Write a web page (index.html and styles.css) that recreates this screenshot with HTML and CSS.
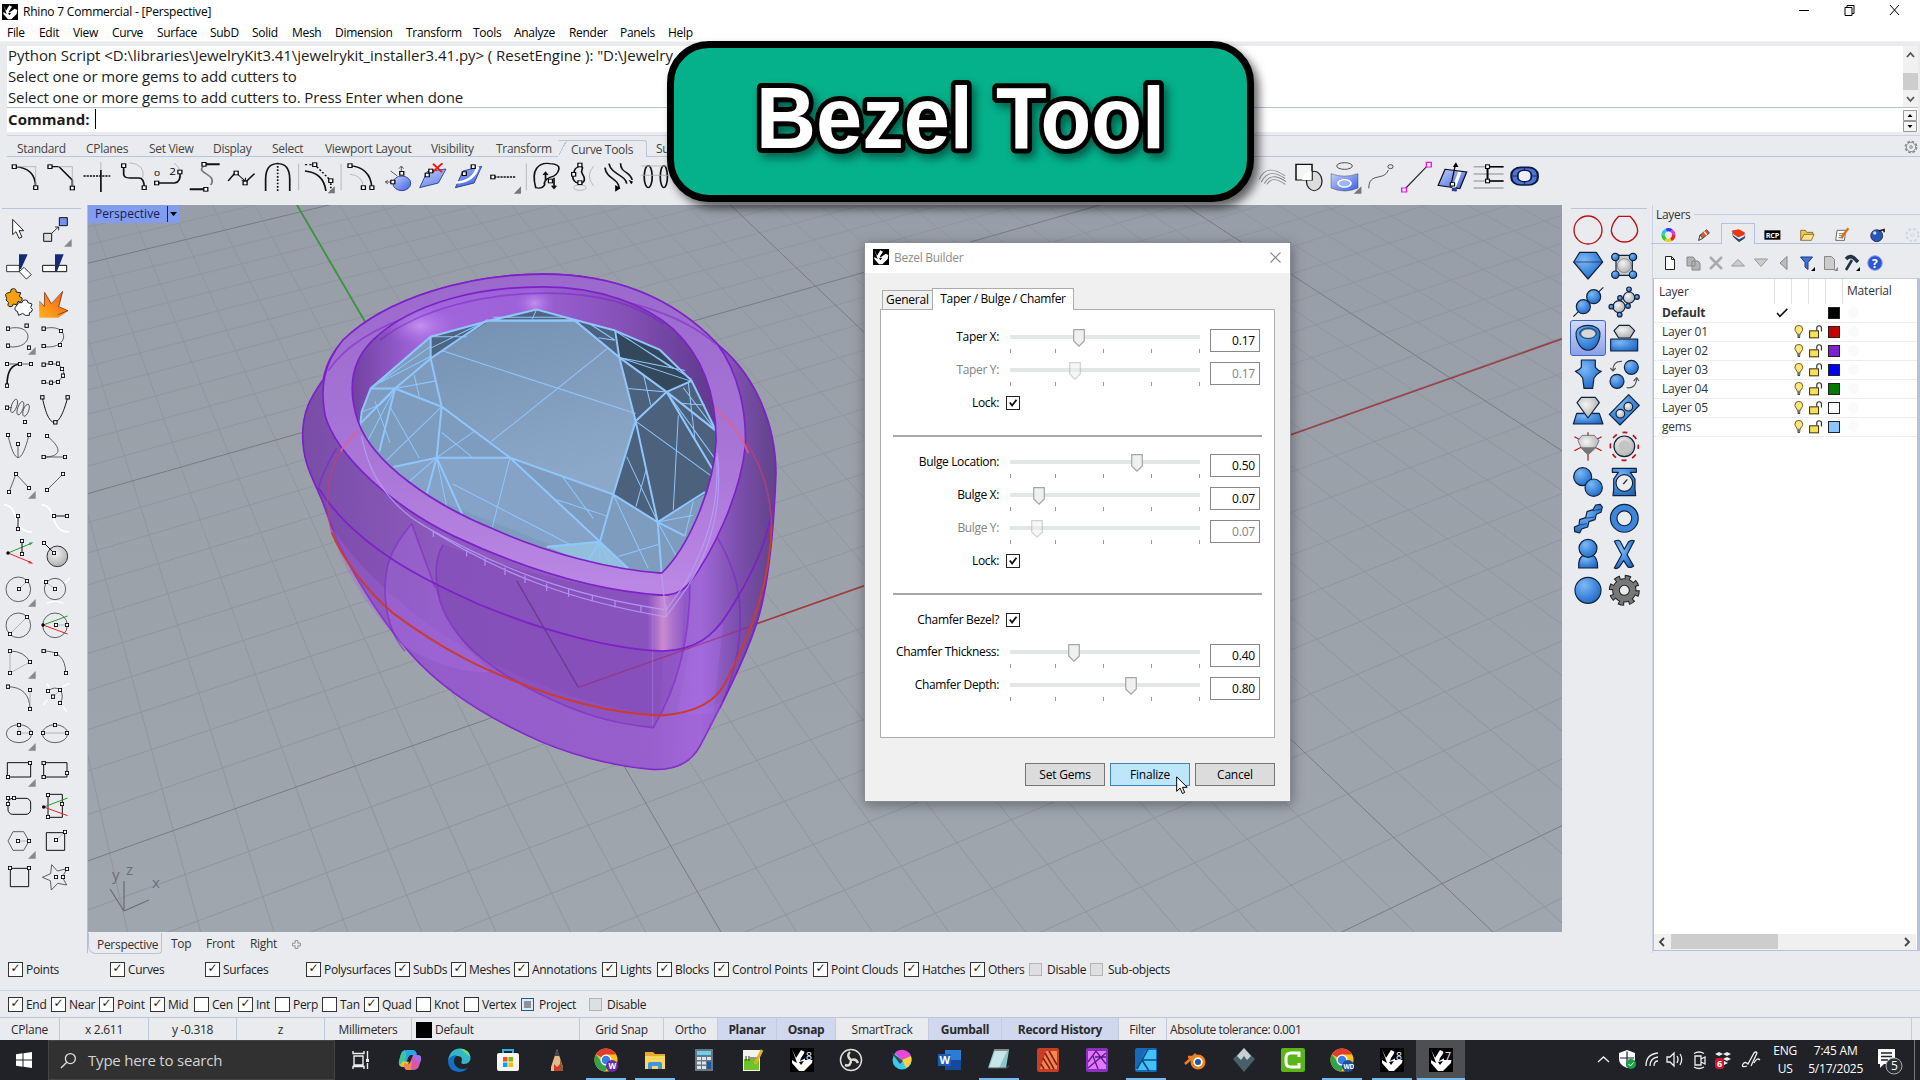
FILE: index.html
```
<!DOCTYPE html>
<html lang="en">
<head>
	<meta charset="utf-8">
	<title>Rhino 7 Commercial - [Perspective]</title>
	<link rel="stylesheet" href="styles.css">
</head>
<body>

<!-- shared symbols -->
<svg class="defs" width="0" height="0">
	<defs>
		<marker id="sq" markerUnits="userSpaceOnUse" markerWidth="14" markerHeight="14" refX="7" refY="7"><rect x="2" y="2" width="10" height="10" fill="#fff" stroke="#000" stroke-width="3"/></marker>
		<marker id="sqw" markerUnits="userSpaceOnUse" markerWidth="14" markerHeight="16" refX="7" refY="8"><rect x="2.500" y="2.500" width="9" height="11" fill="#fff" stroke="#000" stroke-width="2.800"/></marker>
		<radialGradient id="ball" cx=".35" cy=".3" r=".8"><stop offset="0" stop-color="#7fb9f4"/><stop offset=".6" stop-color="#3d86dc"/><stop offset="1" stop-color="#2463b4"/></radialGradient>
		<radialGradient id="silver" cx=".4" cy=".35" r=".8"><stop offset="0" stop-color="#f4f4f4"/><stop offset="1" stop-color="#a2a2a2"/></radialGradient>
		<radialGradient id="shine"><stop offset="0" stop-color="#d8a8fa" stop-opacity=".65"/><stop offset="1" stop-color="#b070ee" stop-opacity="0"/></radialGradient>
		<linearGradient id="steel" x1="0" y1="0" x2="1" y2="1"><stop offset="0" stop-color="#c3d0ff"/><stop offset="1" stop-color="#3d5fe0"/></linearGradient>
		<linearGradient id="fire" x1="0" y1="1" x2="1" y2="0"><stop offset="0" stop-color="#ffb020"/><stop offset="1" stop-color="#ee5a10"/></linearGradient>
		<linearGradient id="rim" x1="0" y1="0" x2="0" y2="1"><stop offset="0" stop-color="#9b68cc"/><stop offset=".5" stop-color="#a673d6"/><stop offset="1" stop-color="#bb88e4"/></linearGradient>
		<linearGradient id="wall" x1="0" y1="0" x2="1" y2="0"><stop offset="0" stop-color="#774aa6"/><stop offset=".3" stop-color="#8d57c0"/><stop offset=".72" stop-color="#9159c4"/><stop offset=".84" stop-color="#a166da"/><stop offset=".92" stop-color="#7a4bac"/><stop offset="1" stop-color="#5f3f88"/></linearGradient>
		<linearGradient id="hole" x1="0" y1="0" x2="1" y2="0"><stop offset="0" stop-color="#6d3f9c"/><stop offset=".2" stop-color="#a166dc"/><stop offset=".5" stop-color="#9c61d6"/><stop offset=".75" stop-color="#8450b6"/><stop offset="1" stop-color="#5c3888"/></linearGradient>
		<linearGradient id="table" x1="0" y1="0" x2=".3" y2="1"><stop offset="0" stop-color="#7591b1"/><stop offset="1" stop-color="#8ca8c8"/></linearGradient>
		<linearGradient id="glint" x1="0" y1="0" x2="1" y2="0"><stop offset="0" stop-color="#c88cdc" stop-opacity=".1"/><stop offset=".4" stop-color="#e4a4d4" stop-opacity=".7"/><stop offset="1" stop-color="#c88cdc" stop-opacity=".05"/></linearGradient>
		<symbol id="more" viewBox="0 0 108 108"><path d="M107 81v23h-23z" fill="#888"/></symbol>
		<symbol id="rhino" viewBox="0 0 24 24"><rect width="24" height="24" fill="#000"/><path d="M2 1l4 9 5-8 4 2-4 6-1 3 4-2 5-4 4 2-1 6-8 8-5 0-7-8 0-3 5 3z" fill="#fff"/><path d="M9 14l5-1-3 4z" fill="#000"/></symbol>
		<symbol id="tickbold" viewBox="0 0 13 13"><path d="M3 6l2.5 3.2L10.3 3" fill="none" stroke="#111" stroke-width="2"/></symbol>
		<symbol id="thumb" viewBox="0 0 12 18"><path d="M.7.7h10.6v11.3l-5.3 5.2-5.3-5.2z" fill="#f0f0f0" stroke="#a5a5a5" stroke-width="1.2"/></symbol>
		<symbol id="bulb" viewBox="0 0 27 36"><path d="M9 24c0-5-6-7-6-13a10 10 0 0120 0c0 6-6 8-6 13z" fill="#ffe57a" stroke="#55440a" stroke-width="2.2"/><path d="M9 28h8M10 32h6" stroke="#444" stroke-width="3"/></symbol>
		<symbol id="unlock" viewBox="0 0 36 36"><rect x="1.500" y="15" width="23" height="18" fill="#f8e05c" stroke="#3a3208" stroke-width="2.6"/><path d="M20 14V8a6 6 0 0112 0v9" fill="none" stroke="#333" stroke-width="3"/></symbol>
		<symbol id="chrome" viewBox="0 0 24 24"><circle cx="12" cy="12" r="11.500" fill="#fbc116"/><path d="M12 12L2 6.300A11.500 11.500 0 0122 6.500H12z" fill="#e33b2e"/><path d="M2 6.300A11.500 11.500 0 0011 23.500L16 14.500 8 14.500z" fill="#31a350"/><circle cx="12" cy="12" r="5.500" fill="#fff"/><circle cx="12" cy="12" r="4.300" fill="#3b7de8"/></symbol>
	</defs>
</svg>

<header class="titlebar">
	<svg class="app-icon"><use href="#rhino"/></svg>
	<span>Rhino 7 Commercial - [Perspective]</span>
	<svg class="window-buttons" viewBox="0 0 120 20"><path d="M5 10.500h10M51 7.500h7v8h-7zM53 7.500v-2h7v8h-2M96 5l9 10M105 5l-9 10" fill="none" stroke="#000"/></svg>
</header>

<nav class="menubar">
	<span>File</span><span>Edit</span><span>View</span><span>Curve</span><span>Surface</span><span>SubD</span><span>Solid</span><span>Mesh</span><span>Dimension</span><span>Transform</span><span>Tools</span><span>Analyze</span><span>Render</span><span>Panels</span><span>Help</span>
</nav>

<section class="command">
	<div class="history">
		<div>
			<p class="wide">Python Script &lt;D:\libraries\JewelryKit3.41\jewelrykit_installer3.41.py&gt; ( ResetEngine ): "D:\Jewelry</p>
			<p>Select one or more gems to add cutters to</p>
			<p>Select one or more gems to add cutters to. Press Enter when done</p>
		</div>
		<svg class="vscroll" viewBox="0 0 15 61"><rect width="15" height="61" fill="#f1f1f1"/><rect y="27" width="15" height="17" fill="#cdcdcd"/><path d="M4 11l3.500-4 3.500 4M4 51l3.500 4 3.500-4" fill="none" stroke="#555" stroke-width="1.800"/></svg>
	</div>
	<div class="prompt">
		<b>Command:</b><i></i>
		<svg viewBox="0 0 15 23"><path d="M.5 1.500h13v10H.5zM.5 12.500h13v10H.5z" fill="#f4f4f4" stroke="#999"/><path d="M4.500 8l2.500-3 2.500 3zM4.500 16l2.500 3 2.500-3z"/></svg>
	</div>
</section>

<section class="toolbars">
	<div class="tabs">
		<span>Standard</span><span>CPlanes</span><span>Set View</span><span>Display</span><span>Select</span><span>Viewport Layout</span><span>Visibility</span><span>Transform</span><span class="on">Curve Tools</span><span>Surface Tools</span>
		<svg class="gear" viewBox="0 0 14 14"><circle cx="7" cy="7" r="5.500" fill="none" stroke="#888" stroke-width="1.800" stroke-dasharray="2.600 1.700"/><circle cx="7" cy="7" r="4.600" fill="none" stroke="#999"/><circle cx="7" cy="7" r="1.300" fill="none" stroke="#888"/></svg>
	</div>
	<div class="icons">
		<svg class="strip-a" viewBox="0 477 1568 111" preserveAspectRatio="none">
			<g class="dark">
				<path d="M32 497Q80 500 80 560M112 497h20l30 40v24M226 507v66M277 494v25q0 12 14 12h20q12 0 12 28M351 546h40q15-2 12-33"/>
				<path d="M454 490h38M425 565h36" stroke-width="6"/>
				<path d="M187 525h60M1100 528h56" stroke-width="5" stroke-dasharray="5 2"/>
				<path d="M511 540l18-28M548 546l22-28M595 570v-35q0-47 27-47t27 47v35"/>
				<path d="M529 516l20 24M541 537l8 4 1-11" stroke-width="2.500"/>
				<path d="M622 485v85M683 491h22l36 48v30" stroke-dasharray="5 5"/>
				<path d="M683 510q42 5 47 60M784 494q45 5 49 65"/>
				<path d="M1200 560q-8-40 2-58 10-18 30-14 22 2 20 16-3 20-20 25-15 10-12 22-6 14-20 9zM1222 540v-25M1241 530v32M1217 522l5-8 5 8M1236 554l5 8 5-8M1299 495c-20 10-10 22-14 25-6 15 5 28 14 27s14-10 6-27 8-18-6-25M1355 500c4 35 30 30 32 62M1364 488c6 34 36 32 40 60M1390 487c0 30 22 24 26 50"/>
				<ellipse cx="1452" cy="527" rx="9" ry="33"/><ellipse cx="1487" cy="527" rx="8" ry="33"/>
			</g>
			<path d="M1378 552l12 10-12 10zM1408 536l10 6-4 8z"/>
			<g class="light">
				<path d="M80 497H35M80 497v60M130 497h32v60M226 483v24M290 485q36 5 30 45M390 487q14 12 13 30M784 520q28 2 30 40M1436 495h64M1436 523h64M1330 495q-20 30 0 60"/>
				<ellipse cx="1299" cy="560" rx="14" ry="8"/>
				<path d="M460 492c-30 25 30 25 12 60" stroke="#777" stroke-width="4"/>
			</g>
			<g class="light"><path d="M669 488v80M764 488v80M1179 488v80" /></g>
			<g stroke="#102a80" stroke-width="2"><ellipse cx="900" cy="547" rx="20" ry="22" fill="url(#steel)"/><path d="M957 512l42-8-17 42-42 14zM1037 510l42-14-17 50-42 14z" fill="url(#steel)"/></g>
			<path d="M1022 545q40-5 48-48" fill="none" stroke="#fff" stroke-width="7"/>
			<path d="M899 515v-18m-5 6l5-8 5 8M878 543h-14m5-5l-6 5 6 6M890 525l-15-15" fill="none" stroke="#333" stroke-width="2"/>
			<path d="M970 488l20 26M991 487l-22 26" stroke="#f01818" stroke-width="5"/>
			<path d="M750 555v22h-16zM1167 556v22h-16z" fill="#777"/>
			<text x="345" y="525" font-size="24">0</text><text x="379" y="522" font-size="26">2</text>
			<path class="ptw" d="M32 497L80 560L112 497L162 561L277 494L323 560L351 546L403 513L457 490L461 565L529 516L549 546L705 491L741 539L784 494L814 560L833 560L900 517L880 543L957 522L965 510L1040 518L1060 497L1104 528L1233 540L1299 492L1285 520L1299 545"/>
		</svg>
		<svg class="strip-b" viewBox="40 477 660 111" preserveAspectRatio="none">
			<path d="M45 535q18-50 60-10M50 543q18-45 55-10M57 548q15-38 50-6M63 550q12-28 42 0" fill="none" stroke="#888" stroke-width="2.500"/>
			<ellipse cx="172" cy="540" rx="18" ry="29" fill="#ddd" stroke="#222" stroke-width="3"/><path d="M130 490h37v47h-37z" fill="#f4f4f4" stroke="#111" stroke-width="3.500"/><path d="M144 537q2-24 22-26v26z" fill="#fff"/>
			<ellipse cx="242" cy="495" rx="18" ry="10" fill="none" stroke="#222" stroke-width="2"/><path d="M211 518q30 15 62 0v43q-30 18-62 0z" fill="url(#steel)" stroke="#123"/><ellipse cx="242" cy="547" rx="15" ry="11" fill="#9fb4ff" stroke="#fff" stroke-width="4"/><path d="M281 556v22h-18z" fill="#777"/>
			<path d="M298 562c0-50 35-20 45-55" fill="none" stroke="#222" stroke-width="2"/><circle cx="348" cy="497" r="6" fill="none" stroke="#222" stroke-width="2"/>
			<path d="M380 566l55-74" stroke="#222" stroke-width="3"/><path d="M374 561h11v12h-11zM431 484h11v14h-11z" fill="#fff" stroke="#f018e0" stroke-width="3.500"/>
			<path d="M474 505l50 8-16 50-50-10z" fill="url(#steel)" stroke="#111" stroke-width="3"/><path d="M508 513l-14 50" stroke="#fff" stroke-width="8"/><path d="M498 490l-10 60" stroke="#111" stroke-width="3"/><path d="M492 498l7-14 6 14z"/><path d="M486 545h10v10h-10z" fill="#fff" stroke="#000" stroke-width="2.500"/><path d="M490 562l12-3-2 12-10-2z" fill="#2848c0" stroke="#111"/>
			<path d="M540 497h69M540 519h69M540 540h69M540 561h69" stroke="#aaa" stroke-width="4.500"/><path d="M609 497h-37v43h37" fill="none" stroke="#000" stroke-width="4.500"/><path class="ptw" d="M572 497L572 540"/>
			<rect x="627" y="499" width="61" height="53" rx="22" fill="#4b74d8" stroke="#101840" stroke-width="5"/><rect x="642" y="508" width="31" height="34" rx="13" fill="#eef" stroke="#101840" stroke-width="4"/><path d="M630 525h12M673 525h14M657 500v8M657 543v8" stroke="#101840" stroke-width="2"/>
		</svg>
	</div>
</section>

<main>
	<aside class="tools-left">
		<svg viewBox="0 36 108 108"><path d="M38 58v46l10-9 9 20 9-4-9-19h14z" fill="#fff" stroke="#222" stroke-width="3"/></svg>
		<svg viewBox="108 36 108 108"><path d="M131 100h24v24h-24z" fill="#ddd" stroke="#111" stroke-width="3"/><path d="M178 53h24v24h-24z" fill="#6f92f5" stroke="#111" stroke-width="3"/><path d="M155 100l20-19M165 81h11v10" fill="none" stroke="#111" stroke-width="2.500"/><use href="#more" x="108" y="36" width="108" height="108"/></svg>
		<svg viewBox="0 144 108 108"><path d="M20 196h38v19H20zM58 215l14-13 22 22-15 13z" fill="#fff" stroke="#111" stroke-width="2.500"/><path d="M57 163h26l-20 44h-6z" fill="#142a78"/></svg>
		<svg viewBox="108 144 108 108"><path d="M128 196h72v19h-72z" fill="#fff" stroke="#111" stroke-width="3"/><path d="M165 163h26l-20 51h-6z" fill="#142a78"/></svg>
		<svg viewBox="0 252 108 108"><path d="M56 308l10 0q2-10 10-8 8 0 8 8l12 4-4 10q10 6 2 14l-6 2 0 8-12 0-8-6-12 6-4-12q-10-2-6-12z" fill="#fff" stroke="#222" stroke-width="3"/><path d="M20 280l12-4q-2-10 8-10t8 10l14 2-4 12q12 2 8 10-2 8-12 4l-4 10-10-2q-2 10-10 8-10-2-4-12l-8-8q4-4 0-10-4-8 2-10z" fill="#f5a010" stroke="#222" stroke-width="3"/></svg>
		<svg viewBox="108 252 108 108"><path d="M118 353l-1-48 16 14 0-42 22 34 34-37-12 46 28 12-30 21z" fill="url(#fire)"/><path d="M118 303l15 16 1-42 20 34 34-37-12 46 28 12-30 12" fill="none" stroke="#622" stroke-width="2"/></svg>
		<svg viewBox="0 360 108 108"><path class="ln" d="M24 386c80-20 80 65 0 54"/><path class="pt" d="M24 386L80 377L24 437L87 443"/><use href="#more" y="360" width="108" height="108"/></svg>
		<svg viewBox="108 360 108 108"><path class="ln" d="M131 386c80-20 80 65 0 54"/><path class="pt" d="M131 386L183 393L180 435L131 438"/></svg>
		<svg viewBox="0 468 108 108"><path class="ln" d="M21 492h72"/><path class="lb thick" d="M21 556q0-64 42-64"/><path class="pt" d="M21 492L60 492L93 492L21 557"/></svg>
		<svg viewBox="108 468 108 108"><path class="ln" d="M131 494c80-20 80 65 0 54"/><path class="pt" d="M131 494L152 489L174 491L186 507L189 527L174 546L153 548L131 546"/></svg>
		<svg viewBox="0 576 108 108"><g class="ln" transform="rotate(20 60 622)"><ellipse cx="42" cy="624" rx="8" ry="21"/><ellipse cx="62" cy="624" rx="8" ry="21"/><ellipse cx="80" cy="624" rx="8" ry="19"/></g><path class="ln" d="M20 623h16"/><path class="pt" d="M21 623L75 666"/></svg>
		<svg viewBox="108 576 108 108"><path class="lb" d="M127 592c20 100 50 100 76 0"/><path class="pt" d="M127 592L166 667L203 592"/></svg>
		<svg viewBox="0 684 108 108"><path class="ln" d="M24 705c20 90 40 90 63 0M54 732v40"/><path class="pt" d="M24 705L54 732L87 705"/></svg>
		<svg viewBox="108 684 108 108"><path class="ln" d="M141 708c50 40 40 63-10 63h64"/><path class="pt" d="M141 708L131 771L195 771"/></svg>
		<svg viewBox="0 792 108 108"><path class="ln" d="M27 876l21-54 39 42"/><path class="pt" d="M27 876L48 822L87 864"/><use href="#more" y="792" width="108" height="108"/></svg>
		<svg viewBox="108 792 108 108"><path class="ln" d="M141 870l48-48"/><path class="pt" d="M141 870L189 822"/></svg>
		<svg viewBox="0 900 108 108"><path d="M12 914c50 5 20 80 84 82" fill="none" stroke="#fff" stroke-width="5"/><path class="lb" d="M54 948v39"/><path class="pt" d="M54 948L54 987"/></svg>
		<svg viewBox="108 900 108 108"><path d="M124 914c50 5 20 80 84 82" fill="none" stroke="#fff" stroke-width="5"/><path class="lb" d="M162 948h39"/><path class="pt" d="M162 948L201 948"/></svg>
		<svg viewBox="0 1008 108 108"><path d="M24 1059l70-29" stroke="#2a9a2a" stroke-width="3"/><path d="M24 1059l70 29" stroke="#e22" stroke-width="3"/><circle cx="24" cy="1059" r="5"/><path d="M100 1027l-10 9-3-8z" fill="#2a9a2a"/><path d="M100 1091l-12-9-3 8z" fill="#e22"/><path class="lb" d="M66 1023v39"/><path class="pt" d="M66 1023L66 1062"/></svg>
		<svg viewBox="108 1008 108 108"><circle cx="172" cy="1069" r="31" fill="url(#silver)" stroke="#333" stroke-width="3"/><path class="lb" d="M132 1029l30 30"/><path class="pt" d="M132 1029L162 1059"/></svg>
		<svg viewBox="0 96 108 108"><circle class="ln" cx="55" cy="148" r="37"/><path class="thin" d="M57 147l24-24"/><path class="pt" d="M57 147L81 123"/><use href="#more" y="96" width="108" height="108"/></svg>
		<svg viewBox="108 96 108 108"><circle class="ln" cx="165" cy="147" r="32"/><path class="thin" d="M165 147l-27-21"/><path d="M140 190q25-12 50 0M195 130l14-16M128 118l8 14" stroke="#fff" stroke-width="4" fill="none"/><path class="pt" d="M165 147L138 126"/></svg>
		<svg viewBox="0 204 108 108"><circle class="ln" cx="55" cy="256" r="37"/><path class="thin" d="M30 282l51-51"/><path class="pt" d="M30 282L81 231"/></svg>
		<svg viewBox="108 204 108 108"><circle class="ln" cx="165" cy="256" r="37"/><path d="M129 255l74-27" stroke="#2a9a2a" stroke-width="3"/><path d="M129 255l74 27" stroke="#e22" stroke-width="3"/><path class="thin" d="M168 255h33"/><circle cx="129" cy="255" r="5"/><path class="pt" d="M168 255L201 255"/></svg>
		<svg viewBox="0 312 108 108"><path class="ln" d="M30 333q42 0 60 33"/><path class="thin" d="M30 333v66l60-33"/><path class="pt" d="M30 333L90 366L30 399"/><use href="#more" y="312" width="108" height="108"/></svg>
		<svg viewBox="108 312 108 108"><path class="ln" d="M131 333q66 0 66 66"/><path class="pt" d="M131 333L168 342L198 399"/></svg>
		<svg viewBox="0 420 108 108"><path class="ln" d="M24 440q64 2 66 66"/><path class="thin" d="M90 450v57"/><path class="pt" d="M24 440L90 450L90 507"/></svg>
		<svg viewBox="108 420 108 108"><path class="ln" d="M144 453q20-16 36-3 14 18 0 39"/><path class="thin" d="M159 470l21-20"/><path d="M140 430l8 12M130 495l12-16M188 440l20-10M190 500l10 16" stroke="#fff" stroke-width="4"/><path class="pt" d="M144 453L180 450L159 470L180 489"/></svg>
		<svg viewBox="0 528 108 108"><ellipse class="ln" cx="57" cy="581" rx="38" ry="27"/><path class="thin" d="M57 555v24h36"/><path class="pt" d="M57 555L57 579L93 579"/><use href="#more" y="528" width="108" height="108"/></svg>
		<svg viewBox="108 528 108 108"><ellipse class="ln" cx="165" cy="581" rx="38" ry="27"/><path class="thin" d="M129 579h72"/><path class="pt" d="M129 579L165 555L201 579"/></svg>
		<svg viewBox="0 636 108 108"><path class="lb" d="M22 668h70v43H22z"/><path class="pt" d="M90 669L24 711"/><use href="#more" y="636" width="108" height="108"/></svg>
		<svg viewBox="108 636 108 108"><path class="lb" d="M131 668h70v43h-70z"/><path class="pt" d="M131 669L131 711L201 699"/></svg>
		<svg viewBox="0 744 108 108"><rect class="lb" x="24" y="775" width="68" height="48" rx="14"/><path class="pt" d="M24 774L42 774L24 792"/></svg>
		<svg viewBox="108 744 108 108"><path class="lb" d="M144 763h43v69h-43z"/><path d="M131 801l72-27" stroke="#2a9a2a" stroke-width="3"/><path d="M131 801l72 26" stroke="#e22" stroke-width="3"/><circle cx="131" cy="801" r="5"/><path class="pt" d="M144 765L186 792L144 831"/></svg>
		<svg viewBox="0 852 108 108"><path class="ln" d="M24 903l15-28h32l16 28-16 28H39z"/><path class="thin" d="M54 903h33"/><path class="pt" d="M54 903L87 903"/><use href="#more" y="852" width="108" height="108"/></svg>
		<svg viewBox="108 852 108 108"><path class="lb" d="M139 878h55v53h-55z"/><path class="thin" d="M168 900l27-24"/><path class="pt" d="M168 900L195 876"/></svg>
		<svg viewBox="0 960 108 108"><path class="lb" d="M31 985h55v55H31z"/><path class="pt" d="M30 984L87 984"/></svg>
		<svg viewBox="108 960 108 108"><path class="ln" d="M155 974l17 19 29-7-14 25 13 24-27-5-19 20-3-28-24-10 25-11z"/><path class="pt" d="M201 987L168 1011L189 1011"/></svg>
	</aside>

	<section class="view">
		<div class="viewport">
			<svg class="scene" viewBox="88 205 1474 727">
				<path id="grid-minor" class="minor"/>
				<path id="grid-major" class="major"/>
				<path class="x-axis" d="M578 687L1562 339"/>
				<path class="y-axis" d="M367 325L297 205"/>
				<!-- bezel and gem -->
				<g transform="translate(280 250) scale(.3333 .3444)">
					<path fill="url(#wall)" fill-opacity=".96" class="edge" d="M1120 1508C1000 1500 850 1460 740 1408C600 1345 480 1270 390 1170C290 1060 190 900 150 790C120 690 68 640 68 540C68 470 90 430 130 375C150 270 230 225 330 170C460 105 640 70 790 70C1000 70 1170 140 1300 265C1420 350 1488 500 1488 650C1480 850 1460 1000 1428 1090C1390 1200 1320 1330 1260 1440C1230 1495 1180 1510 1120 1508Z"/>
					<path d="M115 690C250 880 480 980 600 1030C800 1110 1000 1160 1150 1165L1140 1352C1000 1345 850 1310 700 1250C500 1170 300 1050 195 900C160 840 130 760 115 690z" fill="#8148b4" fill-opacity=".2"/>
					<path d="M150 800C190 950 300 1080 390 1170C480 1270 600 1345 740 1408C850 1460 1000 1500 1120 1508C1180 1510 1230 1495 1260 1440L1340 1300C1290 1345 1220 1352 1140 1352C850 1320 400 1150 150 800z" fill="#a265de" fill-opacity=".35"/>
					<path d="M395 795C330 870 315 920 315 990C318 1060 335 1110 370 1150C480 1210 560 1230 640 1225C560 1170 500 1080 465 980z" fill="#a86ee0" fill-opacity=".4"/>
					<path d="M490 855C460 900 465 960 480 1020C520 1140 640 1220 760 1280C900 1350 1000 1375 1120 1387C1180 1290 1230 1150 1230 970L1145 1002C900 980 700 930 490 855z" fill="#7a42b2" fill-opacity=".35"/>
					<path d="M1105 1003C1160 1010 1190 1000 1215 975L1205 1160C1170 1168 1140 1166 1105 1163z" fill="url(#glint)"/>
					<path d="M1230 1155L1330 1085L1300 1345L1190 1350z" fill="#ac70ee" fill-opacity=".3"/>
					<path d="M710 960L895 1270" stroke="#6a3a94" stroke-width="4"/><path d="M895 1270L1428 1088" stroke="#963070" stroke-width="4" opacity=".65"/>
					<path class="edge faint" d="M395 795C330 870 315 920 315 990C317 1060 335 1120 375 1165M395 795L465 980M490 855C460 900 465 960 480 1020C520 1140 640 1220 760 1280C900 1350 1000 1375 1120 1387C1180 1290 1230 1150 1230 970M1290 800C1370 920 1385 1000 1380 1100C1375 1200 1340 1290 1320 1330M170 575Q130 640 115 690"/>
					<path d="M1118 1040V1380" stroke="#b082e6" stroke-width="3" opacity=".5"/>
					<path class="edge" d="M115 690C230 870 460 970 600 1030C800 1110 1000 1160 1150 1165C1250 1160 1300 1120 1340 1060C1400 970 1470 850 1475 740"/>
					<path d="M155 820C190 900 260 990 340 1055C500 1170 620 1220 700 1250C850 1310 1000 1345 1140 1352C1250 1345 1310 1310 1340 1250C1420 1100 1470 960 1475 800" fill="none" stroke="#c93c30" stroke-width="6"/>
					<path d="M182 585C135 660 135 740 155 820M1475 800C1470 640 1390 510 1280 445" fill="none" stroke="#c04070" stroke-width="5" opacity=".7"/>
					<path class="edge" fill="url(#rim)" d="M1145 1002C950 990 740 930 520 830C340 745 170 600 135 480C120 400 130 330 190 260C320 140 560 70 790 70C1050 70 1210 170 1310 270C1380 360 1400 480 1396 570C1380 720 1290 890 1230 965C1200 1000 1170 1002 1145 1002Z"/>
					<path class="edge faint" d="M145 350C250 200 560 125 800 125C1000 125 1200 180 1310 275"/>
					<path d="M235 525Q200 555 182 585M1280 445Q1370 500 1405 590" fill="none" stroke="#e0608c" stroke-width="6" opacity=".8"/>
					<clipPath id="inner"><path d="M1145 938C1000 930 800 880 640 810C460 740 280 620 235 500C200 400 215 320 280 260C400 150 600 107 790 107C960 107 1100 160 1180 230C1280 320 1310 440 1308 560C1300 700 1220 870 1145 938Z"/></clipPath>
					<g clip-path="url(#inner)">
						<path fill="url(#hole)" d="M200 100H1320V950H200z"/>
						<ellipse cx="420" cy="220" rx="110" ry="60" fill="url(#shine)"/><ellipse cx="765" cy="155" rx="60" ry="45" fill="url(#shine)"/>
						<path class="edge faint" d="M300 262C420 170 620 125 800 125C930 125 1060 150 1150 215"/>
						<path fill="#7d9cbe" d="M770 173L875 200L1000 232L1140 290L1235 380L1308 525V940H240V490L272 402L452 252L630 205z"/>
						<path fill="#84a3c6" d="M470 603L690 603L960 847L850 870L400 700L340 630z"/>
						<path fill="url(#table)" d="M620 205H885L1018 312L1067 497L1000 710L690 603L485 455L452 315z"/>
						<path fill="#4c627c" d="M885 205L1000 232L1235 380L1308 525V690L1133 790L1000 710L1067 497L1018 312z"/>
						<path fill="#33485a" d="M1000 232L1140 290L1235 380L1160 412L1018 312z"/>
						<path fill="#4d6580" d="M770 173L875 200L640 203zM452 252L630 205L452 315z"/>
						<path fill="#92c0dc" d="M800 862L960 847L1045 925L900 900z"/>
						<path class="facet" d="M770 173L875 200L1000 232L1140 290L1235 380L1308 525M770 173L630 205L452 252L272 402L245 470L240 515M620 205H885L1018 312L1067 497L1000 710L690 603L485 455L452 315zM452 252V315L345 402H272M345 402L485 455L470 603L340 630M345 402L245 500M345 402L298 585M470 603H690L960 847L1000 710L1133 790L1067 497L1160 412L1018 312L1005 232M1160 412L1235 380M1160 412L1308 525M1160 412L1300 640M1133 790L1275 703M1133 790L1145 938M1133 790L1215 830M960 847L800 862M960 847L1045 925M960 847L925 900M470 603L548 770M470 603L440 710"/>
						<path class="facet fine" d="M485 292L1067 475M980 288L635 555M640 195H850M770 173L757 200M452 252H560M452 285L600 215M272 402L452 280M300 385L450 310M345 402L468 380M402 362L418 425M485 455L320 610M330 455L418 605M345 402L260 560M285 440L330 560M470 603L585 525M485 530L575 600M690 603L637 805M520 680L870 855M470 603L390 670M470 603L500 745M845 655L940 780M830 725L980 772M1018 312L1230 380M1018 312L1215 350M1000 232L1235 375M1040 255L1180 345M1045 402L1160 412M1090 360L1112 450M1067 497L1300 660M1195 480L1180 755M1040 600L1133 790M1098 640L1068 745M1160 412L1250 560M1210 400L1308 525M1225 385L1245 550M1200 445L1275 450M1160 412L1308 610M1000 710L1105 925M1015 890L1135 855M1133 790L1190 890M1133 790L1240 770M1240 730L1215 830M960 847L990 910M960 847L960 900M930 215L1005 262L955 255M245 470L300 450L330 420"/>
					</g>
					<path class="edge" d="M1145 938C1000 930 800 880 640 810C460 740 280 620 235 500C200 400 215 320 280 260C400 150 600 107 790 107C960 107 1100 160 1180 230C1280 320 1310 440 1308 560C1300 700 1220 870 1145 938Z"/>
					<path d="M245 540C270 680 360 760 430 800C650 920 850 1000 1158 1045M415 790C650 940 880 1020 1158 1065L1225 975C1290 870 1330 740 1312 590M1158 1045L1215 970C1270 870 1320 760 1310 600M1158 1030V1065M1145 940L1158 1060M460 815v18M560 870v20M615 895v22M675 922v22M735 945v22M800 968v22M866 985v22M937 1002v18M1005 1018v20M1083 1030v20" fill="none" stroke="#b9a0fa" stroke-width="3.500" opacity=".85"/>
				</g>
				<g stroke="#6b7077" stroke-width="1.300" fill="none"><path d="M124 911V881M124 911L110 889M124 911L149 900"/></g>
				<g fill="#6b7077" font-size="15"><text x="112" y="880">y</text><text x="126" y="875">z</text><text x="152" y="888">x</text></g>
			</svg>
			<div class="view-label">Perspective<svg viewBox="0 0 10 16"><path d="M.5 0v16" stroke="#223"/><path d="M3 6h7l-3.500 4z"/></svg></div>
		</div>
		<div class="view-tabs">
			<span class="on">Perspective</span><span>Top</span><span>Front</span><span>Right</span>
			<svg viewBox="0 0 10 10"><path d="M3.500.5h3v3h3v3h-3v3h-3v-3h-3v-3h3z" fill="none" stroke="#888"/></svg>
		</div>
	</section>

	<aside class="tools-right">
		<svg viewBox="30 36 108 108"><circle cx="84" cy="90" r="42" fill="none" stroke="#b11" stroke-width="4"/></svg>
		<svg viewBox="138 36 108 108"><path d="M176 49h34c16 16 23 30 23 45a40 38 0 01-79 0c0-15 6-29 22-45z" fill="none" stroke="#b11" stroke-width="4"/></svg>
		<svg viewBox="30 144 108 108" class="out"><path d="M59 157h50l19 29-44 51-43-51z" fill="url(#ball)"/><path d="M41 186h87" stroke-width="2"/></svg>
		<svg viewBox="138 144 108 108" class="out"><path d="M168 166h49v60h-49z" fill="#ccc"/><circle cx="193" cy="197" r="21" fill="url(#silver)" stroke-width="1"/><g fill="url(#ball)"><circle cx="166" cy="171" r="11"/><circle cx="219" cy="171" r="11"/><circle cx="166" cy="224" r="11"/><circle cx="219" cy="224" r="11"/></g></svg>
		<svg viewBox="30 252 108 108" class="out"><path d="M40 350l90-88"/><circle cx="101" cy="290" r="21" fill="url(#ball)"/><circle cx="70" cy="320" r="21" fill="url(#ball)"/></svg>
		<svg viewBox="138 252 108 108" class="out"><circle cx="207" cy="293" r="17" fill="url(#silver)"/><circle cx="177" cy="320" r="18" fill="url(#silver)"/><g fill="url(#ball)"><circle cx="207" cy="268" r="7"/><circle cx="231" cy="291" r="7"/><circle cx="180" cy="294" r="7"/><circle cx="204" cy="318" r="7"/><circle cx="154" cy="320" r="7"/><circle cx="179" cy="344" r="7"/></g></svg>
		<svg viewBox="30 360 108 108" class="out picked"><path d="M46 400c0-35 76-35 76 0 0 25-15 53-38 53s-38-28-38-53z" fill="url(#ball)"/><ellipse cx="84" cy="399" rx="27" ry="17" fill="#2c6ab8" stroke-width="2"/><ellipse cx="85" cy="400" rx="23" ry="14" fill="#d8d8d8" stroke="#666" stroke-width="1"/></svg>
		<svg viewBox="138 360 108 108" class="out"><path d="M177 376h31l16 16-14 22h-34l-14-22z" fill="url(#silver)"/><path d="M152 417h81v36h-81z" fill="url(#ball)"/></svg>
		<svg viewBox="30 468 108 108" class="out"><path d="M64 480h42v22q8 10 18 12-14 8-22 20l-4 31H72l-4-31q-8-12-22-20 12-4 18-12z" fill="url(#ball)"/></svg>
		<svg viewBox="138 468 108 108" class="out"><circle cx="214" cy="502" r="21" fill="url(#ball)"/><circle cx="171" cy="544" r="21" fill="url(#ball)"/><path d="M186 484q-27-2-27 28m-8-8l8 9 8-9M200 563q28 4 30-28m-9 8l9-10 7 10" fill="none" stroke="#555"/></svg>
		<svg viewBox="30 576 108 108" class="out"><path d="M50 640h68l11 32H40z" fill="url(#ball)"/><path d="M64 592h42l12 16-34 46-33-46z" fill="url(#silver)"/></svg>
		<svg viewBox="138 576 108 108" class="out"><path d="M206 584l32 32-58 59-32-32z" fill="url(#ball)"/><circle cx="205" cy="620" r="13" fill="url(#silver)"/><circle cx="181" cy="641" r="13" fill="url(#silver)"/></svg>
		<svg viewBox="30 684 108 108" class="out"><path d="M43 710l82 42M125 710l-82 42M84 697v85" stroke="#b11"/><path d="M66 706h37l14 16q-10 28-33 41-20-12-30-41z" fill="url(#silver)" stroke-width="1.500"/><path d="M60 742h48l-24 22z" fill="#777" stroke="none"/></svg>
		<svg viewBox="138 684 108 108" class="out"><circle cx="193" cy="739" r="42" fill="none" stroke="#b11" stroke-width="5" stroke-dasharray="15 18" stroke-dashoffset="7"/><circle cx="193" cy="739" r="31" fill="url(#silver)"/><circle cx="193" cy="739" r="18" fill="#c4c4c4" stroke="none"/></svg>
		<svg viewBox="30 792 108 108" class="out"><circle cx="68" cy="830" r="27" fill="url(#ball)"/><circle cx="101" cy="863" r="26" fill="url(#ball)"/></svg>
		<svg viewBox="138 792 108 108" class="out"><path d="M157 805h72v12h-18l14 20v30l2 20h-68l2-20v-30l14-20h-18z" fill="url(#ball)"/><circle cx="193" cy="849" r="25" fill="#ececec"/><path d="M190 852l12-14"/></svg>
		<svg viewBox="30 900 108 108" class="out"><path d="M44 995l-1-14 14-6 2-16 18-6 4-18 18-6 8-14 14-2 6 8-4 16-14 6-4 16-18 6-4 16-18 6-6 12z" fill="url(#ball)"/><path d="M58 975l22-4M76 955l28-4M98 932l24-4" stroke-width="2"/></svg>
		<svg viewBox="138 900 108 108"><circle cx="193" cy="955" r="32" fill="none" stroke="#10233c" stroke-width="23"/><circle cx="193" cy="955" r="32" fill="none" stroke="#3d86dc" stroke-width="16"/></svg>
		<svg viewBox="30 1008 108 108" class="out"><path d="M56 1104q-2-34 18-40h22q18 8 17 40z" fill="url(#ball)"/><circle cx="84" cy="1045" r="27" fill="url(#ball)"/></svg>
		<svg viewBox="138 1008 108 108" class="out"><path d="M163 1024q16-8 20 4l10 20 12-22q8-8 18-4l-22 42 20 34q-10 8-18 2l-12-18-14 20q-8 6-14 2l22-40z" fill="url(#ball)"/></svg>
		<svg viewBox="30 1116 108 108" class="out"><circle cx="84" cy="1171" r="39" fill="url(#ball)"/></svg>
		<svg viewBox="138 1116 108 108"><circle cx="193" cy="1171" r="38" fill="none" stroke="#222" stroke-width="17" stroke-dasharray="17 12.850"/><circle cx="193" cy="1171" r="25" fill="none" stroke="#222" stroke-width="23"/><circle cx="193" cy="1171" r="38" fill="none" stroke="#777" stroke-width="11" stroke-dasharray="11 18.850" stroke-dashoffset="-3"/><circle cx="193" cy="1171" r="25" fill="none" stroke="#777" stroke-width="17"/></svg>
	</aside>

	<aside class="layers">
		<div class="panel-title">Layers</div>
		<div class="panel-tabs">
			<svg viewBox="0 0 24 24"><g fill="none" stroke-width="5"><circle cx="12" cy="12" r="8" stroke="#e22" pathLength="6" stroke-dasharray="1 5"/><circle cx="12" cy="12" r="8" stroke="#e3c" pathLength="6" stroke-dasharray="1 5" stroke-dashoffset="1"/><circle cx="12" cy="12" r="8" stroke="#33f" pathLength="6" stroke-dasharray="1 5" stroke-dashoffset="2"/><circle cx="12" cy="12" r="8" stroke="#2cd" pathLength="6" stroke-dasharray="1 5" stroke-dashoffset="3"/><circle cx="12" cy="12" r="8" stroke="#3c3" pathLength="6" stroke-dasharray="1 5" stroke-dashoffset="4"/><circle cx="12" cy="12" r="8" stroke="#ec2" pathLength="6" stroke-dasharray="1 5" stroke-dashoffset="5"/></g></svg>
			<svg viewBox="0 0 24 24"><path d="M5 20l2-8 10-8 4 5-10 8z" fill="#e65430" stroke="#222"/><path d="M5 20l2-8 4 5z" fill="#eee" stroke="#222"/><path d="M13 7l4 5" stroke="#fff" stroke-width="2"/></svg>
			<svg class="on" viewBox="0 0 24 24"><path d="M2 5l2 9 9 8 9-6V8z" fill="#234a9a" stroke="#222"/><path d="M2 5l2 7 9 6 9-5V8z" fill="#f8f8f8"/><path d="M2 4l11-2 9 5-1 4-9 4-8-5z" fill="#e8380c"/></svg>
			<svg viewBox="0 0 24 24"><path d="M0 5h24v14H0z"/><text x="2" y="16" font-size="11" font-weight="bold" fill="#fff" textLength="20">RCP</text></svg>
			<svg viewBox="0 0 24 24"><path d="M2 20V5h7l2 3h9v3" fill="#f6c945" stroke="#5a4408"/><path d="M2 20l5-9h15l-4 9z" fill="#ffe08a" stroke="#5a4408"/></svg>
			<svg viewBox="0 0 24 24"><path d="M4 5h13l-2 15H2z" fill="#fff" stroke="#222"/><path d="M7 10h7M7 13h6M6 16h6" stroke="#333"/><path d="M21 2l-8 10-2 5" stroke="#e56a10" stroke-width="3.500"/></svg>
			<svg viewBox="0 0 24 24"><circle cx="11" cy="13" r="9" fill="#2756b8" stroke="#111"/><circle cx="8" cy="9" r="2.500" fill="#cde"/><path d="M14 6l8-2v4" fill="none" stroke="#222" stroke-width="2.500"/></svg>
			<svg viewBox="0 0 24 24"><circle cx="12" cy="12" r="9" fill="none" stroke="#cbd2e0" stroke-width="2.500" stroke-dasharray="4 3.070"/><circle cx="12" cy="12" r="2.500" fill="none" stroke="#cbd2e0"/></svg>
		</div>
		<div class="panel-tools">
			<svg viewBox="0 0 18 18"><path d="M4.500 2.500h6l3 3v10h-9z" fill="#fff" stroke="#222"/><path d="M10.500 2.500v3h3" fill="none" stroke="#222"/></svg>
			<svg viewBox="0 0 18 18"><path d="M3 3h6l2 2v7H3zM8 7h6l2 2v7H8z" fill="#b5b5b5" stroke="#888"/></svg>
			<svg viewBox="0 0 18 18"><path d="M3 3l12 12M15 3L3 15" stroke="#aaa" stroke-width="2.500"/></svg>
			<svg viewBox="0 0 18 18"><path d="M2.500 12h13L9 5.500z" fill="#ccc" stroke="#999"/></svg>
			<svg viewBox="0 0 18 18"><path d="M2.500 5h13L9 12.500z" fill="#ccc" stroke="#999"/></svg>
			<svg viewBox="0 0 18 18"><path d="M12 2.500v13L5 9z" fill="#bbb" stroke="#888"/></svg>
			<svg viewBox="0 0 18 18"><path d="M2.500 3h12L10 8.500v7L7 13V8.500z" fill="#4170d8" stroke="#1c3a80"/><path d="M17 13v4h-4z"/></svg>
			<svg viewBox="0 0 18 18"><path d="M3.500 2.500h7l3 3v10h-10z" fill="#ccc" stroke="#888"/><path d="M17 13v4h-4z" fill="#888"/></svg>
			<svg viewBox="0 0 18 18"><path d="M3 5q4-4 8-1l4 4" fill="none" stroke="#234" stroke-width="3.600"/><path d="M9 6L3 16" fill="none" stroke="#234" stroke-width="2.600"/><path d="M17 13v4h-4z"/></svg>
			<svg viewBox="0 0 18 18"><circle cx="9" cy="9" r="7.300" fill="#2f55d4" stroke="#8da4ee"/><text x="6" y="13.500" font-size="12" font-weight="bold" fill="#fff">?</text></svg>
		</div>
		<div class="layer-list">
			<div class="lrow head"><span>Layer</span><i></i><i></i><i></i><i></i><span>Material</span></div>
			<div class="lrow"><b>Default</b><svg viewBox="0 0 17 17"><path d="M2.500 8.500l3.500 4 9-9" fill="none" stroke="#111" stroke-width="1.900"/></svg><i></i><i></i><em class="c-black"></em><s></s></div>
			<div class="lrow"><span>Layer 01</span><i></i><svg><use href="#bulb"/></svg><svg><use href="#unlock"/></svg><em class="c-red"></em><s></s></div>
			<div class="lrow"><span>Layer 02</span><i></i><svg><use href="#bulb"/></svg><svg><use href="#unlock"/></svg><em class="c-purple"></em><s></s></div>
			<div class="lrow"><span>Layer 03</span><i></i><svg><use href="#bulb"/></svg><svg><use href="#unlock"/></svg><em class="c-blue"></em><s></s></div>
			<div class="lrow"><span>Layer 04</span><i></i><svg><use href="#bulb"/></svg><svg><use href="#unlock"/></svg><em class="c-green"></em><s></s></div>
			<div class="lrow"><span>Layer 05</span><i></i><svg><use href="#bulb"/></svg><svg><use href="#unlock"/></svg><em class="c-white"></em><s></s></div>
			<div class="lrow"><span>gems</span><i></i><svg><use href="#bulb"/></svg><svg><use href="#unlock"/></svg><em class="c-sky"></em><s></s></div>
			<svg class="hscroll" viewBox="0 0 262 16"><rect width="262" height="16" fill="#f0f0f0"/><rect x="17" width="107" height="15" fill="#cdcdcd"/><path d="M10 4L6 8l4 4M251 4l4 4-4 4" fill="none" stroke="#444" stroke-width="1.800"/></svg>
		</div>
	</aside>
</main>

<div class="filters">
	<label class="ck">Points</label><label class="ck">Curves</label><label class="ck">Surfaces</label><label class="ck">Polysurfaces</label><label class="ck">SubDs</label><label class="ck">Meshes</label><label class="ck">Annotations</label><label class="ck">Lights</label><label class="ck">Blocks</label><label class="ck">Control Points</label><label class="ck">Point Clouds</label><label class="ck">Hatches</label><label class="ck">Others</label><label class="off">Disable</label><label class="off">Sub-objects</label>
</div>
<div class="osnaps">
	<label class="ck">End</label><label class="ck">Near</label><label class="ck">Point</label><label class="ck">Mid</label><label>Cen</label><label class="ck">Int</label><label>Perp</label><label>Tan</label><label class="ck">Quad</label><label>Knot</label><label>Vertex</label><label class="mixed">Project</label><label class="off">Disable</label>
</div>

<footer class="status">
	<span>CPlane</span><span>x 2.611</span><span>y -0.318</span><span>z</span><span>Millimeters</span><span class="current"><i></i>Default</span><span>Grid Snap</span><span>Ortho</span><b>Planar</b><b>Osnap</b><span>SmartTrack</span><b>Gumball</b><b>Record History</b><span>Filter</span><span class="last">Absolute tolerance: 0.001</span>
</footer>

<div class="taskbar">
	<svg class="start" viewBox="0 0 16 16"><path d="M0 2.200l6.500-.9v6.200H0zM7.500 1.200L16 0v7.500H7.500zM0 8.500h6.500v6.200L0 13.800zM7.500 8.500H16V16l-8.500-1.200z" fill="#fff"/></svg>
	<div class="search"><svg viewBox="0 0 18 18"><circle cx="11" cy="7" r="5.300" fill="none" stroke="#ddd" stroke-width="1.400"/><path d="M7.200 10.800L1 17" stroke="#ddd" stroke-width="1.500"/></svg>Type here to search</div>
	<div class="apps">
		<span><svg viewBox="0 0 24 24"><path d="M5 8h9v9H5zM4 3v2.500h11V3M4 21v-2.500h11V21M18.500 3v8M18.500 15v6" fill="none" stroke="#eee" stroke-width="1.400"/><path d="M17 11h3v3h-3z" fill="#eee"/></svg></span>
		<span><svg viewBox="0 0 24 24"><path d="M9 2h6q3 0 4 5h-6q-2 0-3 3L7 19q-1 0-3 0-4-1-3-6l2-7q1-4 6-4z" fill="#2aa4e4"/><path d="M1 13l2-7q1-3 4-4 2 5 0 10l-3 7q-4-1-3-6z" fill="#3fc4a0"/><path d="M2 17q1 2 4 2h3l2-5-6-1z" fill="#e8c430"/><path d="M15 22H9q-2 0-3-4l1-3q2 3 5 0l3-8h4q5 0 4 5l-2 6q-1 4-6 4z" fill="#d858a8"/><path d="M6 18l1-3q2 3 5 0l2-3-1 10H9q-2 0-3-4z" fill="#f08850"/><path d="M15 7h4q5 0 4 5l-1 2-7-4z" fill="#a070f0"/></svg></span>
		<span><svg viewBox="0 0 24 24"><path d="M1 13C2 4 8 0 13 .5 20 1 24 6 23.500 11q-1 5-7 5-3-.5-2-2 2-6-4-6Q3 8 1 13z" fill="#37b5c8"/><path d="M1 13Q3 7 10 7q-5 5-2 10 4 6 13 3-4 4-9 4Q1 23 1 13z" fill="#1270c8"/><path d="M13 .5Q22 1 23.500 9l-4-3z" fill="#6adf7a"/></svg></span>
		<span><svg viewBox="0 0 24 24"><path d="M7 6V2h10v4" fill="none" stroke="#28b5e8" stroke-width="2"/><rect x="1" y="5" width="22" height="18" rx="2" fill="#f5f5f5"/><path d="M7 9h4.500v4.500H7z" fill="#f05022"/><path d="M12.500 9H17v4.500h-4.500z" fill="#7fba00"/><path d="M7 14.500h4.500V19H7z" fill="#00a4ef"/><path d="M12.500 14.500H17V19h-4.500z" fill="#ffb900"/></svg></span>
		<span><svg viewBox="0 0 24 24"><path d="M12 1l6 18v4H6v-4z" fill="#e6b98a"/><path d="M12 1l2.500 7h-5z" fill="#444"/><path d="M9 16l3 3 3-3v7H9z" fill="#d43a24"/><path d="M15 11l3 8v4h-3z" fill="#8a5a3a"/></svg></span>
		<span class="run"><svg viewBox="0 0 24 24"><use href="#chrome"/><circle cx="18" cy="18" r="6" fill="#6a2aa8"/><text x="14.500" y="21" font-size="8" font-weight="bold" fill="#fff">W</text></svg></span>
		<span class="run"><svg viewBox="0 0 24 24"><path d="M2 4h8l2 2h10v15H2z" fill="#e9a92c"/><path d="M2 8h20v13H2z" fill="#ffd75e"/><path d="M5 21v-5q0-2 2-2h10q2 0 2 2v5h-4v-3H9v3z" fill="#3a97e0"/></svg></span>
		<span><svg viewBox="0 0 24 24"><path d="M3 1h18v22H3z" fill="#6a7680"/><path d="M5 3h14v4H5z" fill="#64d2f2"/><path d="M5 9h4v3H5zM10 9h4v3h-4zM15 9h4v3h-4zM5 13.500h4v3H5zM10 13.500h4v3h-4zM5 18h4v3H5zM10 18h4v3h-4z" fill="#dde4ea"/><path d="M15 13.500h4V21h-4z" fill="#1b58a8"/></svg></span>
		<span><svg viewBox="0 0 24 24"><path d="M2 2h17v21H2z" fill="#f4f4ea"/><path d="M3 11h15v11H3z" fill="#6cc42a"/><path d="M5 8v5M8 8v5M9 10h7" stroke="#333"/><path d="M21 2l-7 14" stroke="#e8b020" stroke-width="3"/></svg></span>
		<span><svg viewBox="0 0 24 24"><use href="#rhino"/><path d="M14 0h10v12h-9z"/><text x="16" y="11.500" font-size="10.500" fill="#fff">8</text></svg></span>
		<span><svg viewBox="0 0 24 24"><circle cx="12" cy="12" r="10.500" fill="#222" stroke="#ddd" stroke-width="1.500"/><path d="M11 4q-4 4 1 8M19 15q-2-5-7-3M6 17q6 2 6-5" fill="none" stroke="#ddd" stroke-width="2.400"/></svg></span>
		<span><svg viewBox="0 0 24 24"><circle cx="13" cy="12" r="9.500" fill="#38c8f0"/><path d="M13 12L6 5a9.500 9.500 0 0116 3z" fill="#e848d8"/><path d="M13 12l9-4a9.500 9.500 0 01-5 12z" fill="#f8d040"/><path d="M2 4l12 9-3 3z" fill="#444"/></svg></span>
		<span><svg viewBox="0 0 24 24"><path d="M7 2h16v20H7z" fill="#2b7cd3"/><path d="M7 12h16v10H7z" fill="#154a9a"/><path d="M0 6h13v12H0z" fill="#1a5bbd"/><text x="1.500" y="16" font-size="11" font-weight="bold" fill="#fff">W</text></svg></span>
		<span class="run"><svg viewBox="0 0 24 24"><path d="M7 2h15l-3 18H1z" fill="#8fc4cc"/><path d="M8 3h12L12 20H2z" fill="#c8e6ea"/><path d="M7 1h15v2H7z" fill="#888"/><path d="M1 20h18l3-2" stroke="#556" fill="none"/></svg></span>
		<span><svg viewBox="0 0 24 24"><rect x="1" width="22" height="24" rx="2" fill="#c83c28"/><path d="M4 21L10 3h11v18z" fill="#ee8a50"/><path d="M9 5l9 16M7 10l7 11M13 3l8 14M5 16l3 5" stroke="#8c1c1c" stroke-width="1.600"/></svg></span>
		<span><svg viewBox="0 0 24 24"><rect x="1" width="22" height="24" rx="2" fill="#8a30c0"/><path d="M3 3h18v18H3z" fill="#e278f8"/><path d="M3 14l8-11 10 13M8 8l5 13M21 5L3 20M10 9h11" stroke="#5a1890" stroke-width="1.300" fill="none"/></svg></span>
		<span class="run"><svg viewBox="0 0 24 24"><rect x="1" width="22" height="24" rx="2" fill="#1668b8"/><path d="M2 22L12 2h10v20z" fill="#42c0f8"/><path d="M14 1L3 21M8 12h15M8 12l7 11" stroke="#104a80" stroke-width="1.600"/></svg></span>
		<span><svg viewBox="0 0 24 24"><path d="M2 16l11-10M5 9h8" stroke="#f08020" stroke-width="2.600"/><circle cx="15" cy="14" r="7.500" fill="#f08020"/><circle cx="15" cy="14" r="4.700" fill="#fff"/><circle cx="15" cy="14" r="3" fill="#1a5a9a"/></svg></span>
		<span><svg viewBox="0 0 24 24"><path d="M12 0l11 11-11 13L1 11z" fill="#48606a"/><path d="M12 0l7 8-4 4-3-4-3 4-4-4z" fill="#c8d0d4"/></svg></span>
		<span><svg viewBox="0 0 24 24"><rect width="24" height="24" rx="2" fill="#5cb516"/><path d="M18 9V5H10Q5 5 5 10v4q0 5 5 5h8v-4" fill="none" stroke="#fff" stroke-width="3"/></svg></span>
		<span class="run"><svg viewBox="0 0 24 24"><use href="#chrome"/><circle cx="18" cy="18" r="6" fill="#1c4f9e"/><text x="13.500" y="20.500" font-size="6.500" font-weight="bold" fill="#fff">WD</text></svg></span>
		<span class="run"><svg viewBox="0 0 24 24"><use href="#rhino"/><path d="M14 0h10v12h-9z"/><text x="16" y="11.500" font-size="10.500" fill="#fff">8</text></svg></span>
		<span class="run active"><svg viewBox="0 0 24 24"><use href="#rhino"/><path d="M14 0h10v12h-9z"/><text x="16" y="11.500" font-size="10.500" fill="#fff">7</text></svg></span>
	</div>
	<svg class="tray" viewBox="0 0 170 24">
		<g fill="none" stroke="#eee" stroke-width="1.300">
			<path d="M4 15l5.500-5 5.500 5"/>
			<path d="M52 19q0-12 12-13M56 19q0-8 8-9M60 19q0-5 4-5"/>
			<path d="M73 10v5h3l4 4V6l-4 4zM83 9q2 3 0 7M86 7q3.500 5 0 11"/>
			<path d="M100 6.500q5-3 10 0M100 20q5 3 10 0M101 9h6v9h-6zM107 12l4-2v7l-4-2"/>
			<path d="M153 19q-6 2-4-2 2-3 5 0l6-11q2-2 3 0l-6 13M160 16q3-6 6-3"/>
		</g>
		<path d="M33 3l8 3v6q0 6-8 9-8-3-8-9V6z" fill="#fff"/><path d="M33 4.500v15M26 11h14" stroke="#222" stroke-width="1.200"/><circle cx="37" cy="17" r="5" fill="#18a048"/><path d="M34.500 17l2 2 3-3.500" stroke="#fff" fill="none"/>
		<path d="M121 7l4-2 4 2-4 2zM129 7l4-2 4 2-4 2zM129 12l4-2 4 2-4 2zM126 16l4-2 4 2-4 2z" fill="#eee"/><rect x="121" y="11" width="9" height="11" rx="3" fill="#d8142a"/><text x="123" y="20" font-size="9" font-weight="bold" fill="#fff">6</text>
	</svg>
	<div class="lang">ENG<br>US</div>
	<div class="clock">7:45 AM<br>5/17/2025</div>
	<svg class="notes" viewBox="0 0 28 34"><path d="M2 5h17v15H8l-4 4v-4H2z" fill="#fff"/><path d="M5 9h11M5 12.500h11M5 16h7" stroke="#222" stroke-width="1.400"/><circle cx="18" cy="22" r="8" fill="#2c2f34" stroke="#aaa"/><text x="15" y="26" font-size="12" fill="#fff">5</text></svg>
	<i class="peek"></i>
</div>

<!-- Bezel Builder window -->
<div class="dialog">
	<div class="dialog-title"><svg class="app-icon"><use href="#rhino"/></svg>Bezel Builder<svg class="close" viewBox="0 0 11 11"><path d="M.5.5l10 10M10.500.5l-10 10" stroke="#888" stroke-width="1.100"/></svg></div>
	<div class="dialog-tabs"><span>General</span><span class="on">Taper / Bulge / Chamfer</span></div>
	<div class="pane">
		<div class="row"><label>Taper X:</label><div class="slider"><svg style="left:68px"><use href="#thumb"/></svg><u></u><u></u><u></u><u></u><u></u></div><output>0.17</output></div>
		<div class="row disabled"><label>Taper Y:</label><div class="slider"><svg style="left:64px"><use href="#thumb"/></svg><u></u><u></u><u></u><u></u><u></u></div><output>0.17</output></div>
		<div class="row"><label>Lock:</label><svg class="box"><use href="#tickbold"/></svg></div>
		<hr>
		<div class="row"><label>Bulge Location:</label><div class="slider"><svg style="left:126px"><use href="#thumb"/></svg><u></u><u></u><u></u><u></u><u></u></div><output>0.50</output></div>
		<div class="row"><label>Bulge X:</label><div class="slider"><svg style="left:28px"><use href="#thumb"/></svg><u></u><u></u><u></u><u></u><u></u></div><output>0.07</output></div>
		<div class="row disabled"><label>Bulge Y:</label><div class="slider"><svg style="left:26px"><use href="#thumb"/></svg><u></u><u></u><u></u><u></u><u></u></div><output>0.07</output></div>
		<div class="row"><label>Lock:</label><svg class="box"><use href="#tickbold"/></svg></div>
		<hr>
		<div class="row short"><label>Chamfer Bezel?</label><svg class="box"><use href="#tickbold"/></svg></div>
		<div class="row"><label>Chamfer Thickness:</label><div class="slider"><svg style="left:63px"><use href="#thumb"/></svg><u></u><u></u><u></u><u></u><u></u></div><output>0.40</output></div>
		<div class="row"><label>Chamfer Depth:</label><div class="slider"><svg style="left:120px"><use href="#thumb"/></svg><u></u><u></u><u></u><u></u><u></u></div><output>0.80</output></div>
	</div>
	<div class="actions"><span>Set Gems</span><span class="hot">Finalize</span><span>Cancel</span></div>
</div>
<svg class="cursor" viewBox="0 0 12 19"><path d="M.7.8v14.500l3.400-3.200 2.300 5.400 2.300-1-2.300-5.200h4.800z" fill="#fff" stroke="#000"/></svg>

<div class="banner">
	<svg viewBox="0 0 587 161"><text x="89" y="107" textLength="409" lengthAdjust="spacingAndGlyphs">Bezel Tool</text></svg>
</div>

<script src="grid.js"></script>
</body>
</html>
```

FILE: styles.css
```
* {
	margin: 0;
	padding: 0;
	box-sizing: border-box;
}

body {
	width: 1920px;
	height: 1080px;
	overflow: hidden;
	display: flex;
	flex-direction: column;
	background: #e9ebef;
	color: #1c1c1c;
	font-family: "Open Sans", "Noto Sans", sans-serif;
	font-size: 12px;
	letter-spacing: -0.3px;
	white-space: nowrap;
}

i, em, s, u {
	font-style: normal;
	text-decoration: none;
}

.defs {
	position: absolute;
}

.titlebar {
	display: flex;
	align-items: center;
	height: 23px;
	padding-left: 2px;
	background: #fff;
	color: #000;
}
.app-icon {
	width: 16px;
	height: 16px;
	margin-right: 5px;
}
.titlebar span {
	letter-spacing: -0.2px;
}
.window-buttons {
	width: 120px;
	height: 20px;
	margin: 0 6px 3px auto;
}

.menubar {
	display: grid;
	grid-template-columns: 32px 34px 39px 45px 53px 42px 40px 43px 71px 67px 41px 55px 51px 48px 60px;
	align-items: center;
	height: 18px;
	padding: 1px 0 0 7px;
	background: #fff;
	color: #000;
}

/* command history and prompt */
.command {
	height: 91px;
	padding: 4px 2px 0 7px;
	border-top: 1px solid #f3f3f5;
	font-size: 15px;
	letter-spacing: -0.12px;
}
.history {
	display: flex;
	justify-content: space-between;
	height: 62px;
	overflow: hidden;
	background: #fff;
	border-bottom: 1px solid #b4c3d6;
	padding-left: 1px;
}
.history p {
	height: 21px;
	line-height: 19px;
}
.history .wide {
	letter-spacing: -0.05px;
}
.vscroll {
	width: 15px;
	height: 61px;
}
.prompt {
	display: flex;
	align-items: center;
	height: 24px;
	padding: 0 0 2px 1px;
	background: #fff;
}
.prompt b {
	letter-spacing: 0.08px;
}
.prompt i {
	width: 1px;
	height: 20px;
	margin-left: 5px;
	background: #000;
}
.prompt svg {
	width: 15px;
	height: 23px;
	margin: 2px 0 0 auto;
}

.toolbars {
	height: 73px;
	padding-top: 3px;
}
.tabs {
	display: grid;
	grid-template-columns: 69px 63px 64px 59px 53px 106px 65px 62px 89px 1fr 20px;
	height: 22px;
	margin-left: 7px;
	padding-left: 10px;
	border-top: 1px solid #cbd3e2;
	border-bottom: 1px solid #b9c5da;
	line-height: 26px;
	color: #444;
}
.tabs .on {
	margin: 4px 0 -1px 0;
	height: 17px;
	padding-left: 12px;
	line-height: 17px;
	background: #e9ebef;
	border: 1px solid #b9c5da;
	border-bottom: 0;
	border-left-color: transparent;
	border-radius: 0 3px 0 0;
	background-image: linear-gradient(118deg, #e9ebef 6px, #b9c5da 6px, #b9c5da 7px, #e9ebef 7px);
}
.tabs .on + span {
	padding-left: 9px;
}
.tabs .gear {
	width: 14px;
	height: 14px;
	margin: 4px 0 0 4px;
}
.icons {
	display: flex;
	align-items: center;
	height: 41px;
}
.strip-a {
	width: 700px;
	height: 37px;
	margin-top: 2px;
}
.strip-b {
	width: 286px;
	height: 37px;
	margin: 2px 0 0 557px;
}
.dark {
	fill: none;
	stroke: #111;
	stroke-width: 3.8;
}
.light {
	fill: none;
	stroke: #aaa;
	stroke-width: 2;
}
.ptw {
	fill: none;
	stroke: none;
	marker: url(#sqw);
}

main {
	display: flex;
	height: 748px;
}

.tools-left, .tools-right {
	display: grid;
	align-content: start;
	grid-template-columns: 36px 36px;
	grid-auto-rows: 36px;
	padding-top: 7px;
}
.tools-left {
	width: 88px;
	border-right: 1px solid #b4bfd0;
	background: linear-gradient(#b9c5da, #b9c5da) 2px 3px / 79px 1px no-repeat;
}
.tools-right {
	width: 91px;
	padding-left: 8px;
	background: linear-gradient(#b9c5da, #b9c5da) 9px 3px / 76px 1px no-repeat;
	border-right: 1px solid #cbd3e2;
}
.tools-left svg, .tools-right svg {
	width: 36px;
	height: 36px;
}
.ln, .lb, .thin {
	fill: none;
	stroke: #444;
	stroke-width: 2.5;
}
.lb {
	stroke: #111;
	stroke-width: 3;
}
.thick {
	stroke-width: 5;
}
.thin {
	stroke: #999;
	stroke-width: 2;
}
.pt {
	fill: none;
	stroke: none;
	marker: url(#sq);
}
.out {
	stroke: #10233c;
	stroke-width: 3.5;
	stroke-linejoin: round;
}
.picked {
	background: linear-gradient(#d0d9ff, #8b9fe8);
	border: 1px solid #3f68b4;
	border-radius: 3px;
}

.view {
	width: 1474px;
}
.viewport {
	position: relative;
	height: 727px;
	background: linear-gradient(#989ea7, #a0a6ae);
}
.scene {
	display: block;
	width: 1474px;
	height: 727px;
}
.minor, .major, .x-axis, .y-axis {
	fill: none;
	stroke: #9096a0;
	stroke-width: 1;
}
.major {
	stroke: #777c84;
}
.x-axis {
	stroke: #a23b40;
	stroke-width: 1.6;
}
.y-axis {
	stroke: #3c9440;
	stroke-width: 1.8;
}
.edge {
	stroke: #7c20c8;
	stroke-width: 5;
}
.edge:not([fill]) {
	fill: none;
}
.faint {
	opacity: .5;
}
.facet {
	fill: none;
	stroke: #90c6fc;
	stroke-width: 6;
}
.fine {
	stroke-width: 3;
}
.view-label {
	position: absolute;
	left: 0;
	top: 0;
	display: flex;
	align-items: center;
	width: 91px;
	height: 18px;
	padding: 0 0 1px 7px;
	background: #829df0;
	color: #142050;
	letter-spacing: 0.05px;
}
.view-label svg {
	width: 10px;
	height: 16px;
	margin-left: 7px;
}
.view-tabs {
	display: grid;
	grid-template-columns: 74px 35px 44px 43px 20px;
	align-items: center;
	height: 21px;
	line-height: 23px;
	color: #333;
}
.view-tabs .on {
	height: 21px;
	padding-left: 8px;
	border: 1px solid #b4c3dc;
	border-top: 0;
	border-radius: 0 0 4px 8px;
}
.view-tabs span + span {
	padding-left: 9px;
}
.view-tabs svg {
	width: 9px;
	height: 9px;
	margin: 1px 0 0 8px;
}

/* layers panel */
.layers {
	display: flex;
	flex-direction: column;
	width: 267px;
	height: 746px;
	color: #333;
}
.panel-title {
	height: 18px;
	padding: 1px 0 0 3px;
	line-height: 18px;
	background: linear-gradient(#c4cde0, #c4cde0) 41px 9px / 230px 1px no-repeat;
}
.panel-tabs {
	display: flex;
	height: 21px;
	margin-left: -2px;
	border-bottom: 1px solid #b4c3dc;
}
.panel-tabs svg {
	width: 34.8px;
	height: 21px;
	padding: 4px 6px 1px;
	flex: none;
}
.panel-tabs .on {
	border: 1px solid #b4c3dc;
	border-bottom: 0;
	background: #e9ebef;
	margin-bottom: -1px;
	height: 21px;
}
.panel-tools {
	display: flex;
	align-items: center;
	gap: 4.8px;
	height: 35px;
	padding: 3px 0 0 8px;
	border-bottom: 1px solid #c4cde0;
}
.panel-tools svg {
	width: 18px;
	height: 18px;
	flex: none;
}
.layer-list {
	flex: 1;
	display: flex;
	flex-direction: column;
	background: #fff;
	border: 1px solid #b4c3dc;
	border-top: 0;
	border-width: 0 3px 1px 1px;
}
.lrow {
	display: grid;
	grid-template-columns: 112px 17px 17px 18px 17px 1fr;
	align-items: center;
	height: 19px;
	padding: 0 0 1px 8px;
	border-bottom: 1px solid #ececee;
	letter-spacing: -0.2px;
}
.head {
	height: 25px;
	padding: 0 0 0 5px;
	grid-template-columns: 115px 17px 17px 17px 17px 1fr;
	border: 0;
}
.head i, .head span + i, .head i + span {
	border-left: 1px solid #dfdfdf;
	height: 25px;
	line-height: 24px;
}
.head i + span {
	padding-left: 4px;
}
.lrow svg {
	width: 14px;
	height: 14px;
	margin-left: 1px;
}
.lrow em {
	width: 12px;
	height: 12px;
	margin-left: 2px;
	border: 1px solid #222;
}
.lrow s {
	width: 11px;
	height: 11px;
	margin-left: 5px;
	border-radius: 6px;
	background: #fafafa;
}
.c-black { background: #000; }
.c-red { background: #c80000; }
.c-purple { background: #7c22cc; }
.c-blue { background: #0000f8; }
.c-green { background: #007a00; }
.c-white { background: #fff; }
.c-sky { background: #8cc4fc; }
.layer-list .hscroll {
	width: 262px;
	height: 16px;
	margin-top: auto;
}

/* selection filter, osnap */
.filters, .osnaps {
	display: grid;
	align-items: center;
	height: 38px;
	padding: 0 0 4px 8px;
	grid-template-columns: 102px 95px 101px 89px 56px 63px 88px 55px 57px 99px 91px 66px 59px 61px 100px;
	border-bottom: 1px solid #cbd3e2;
}
.osnaps {
	height: 27px;
	padding-bottom: 0;
	grid-template-columns: 43px 48px 51px 44px 44px 37px 47px 42px 52px 48px 57px 68px 100px;
	border-bottom-color: #b9c5da;
}
.filters label, .osnaps label {
	display: flex;
	align-items: center;
	gap: 3px;
}
.filters label::before, .osnaps label::before {
	content: "";
	width: 13px;
	height: 13px;
	background: #fff;
	border: 1px solid #333;
	font: 12px/11px "DejaVu Sans";
	text-align: center;
	letter-spacing: 0;
}
.filters .ck::before, .osnaps .ck::before {
	content: "✓";
}
.filters .off::before, .osnaps .off::before {
	width: 11px;
	height: 11px;
	margin-right: 2px;
	background: #dedfe0;
	border-color: #b4b4b4;
}
.osnaps .mixed::before {
	width: 11px;
	height: 11px;
	margin-right: 2px;
	background: #8e9196;
	border-color: #1c5aa0;
	box-shadow: inset 0 0 0 2px #dcebfa;
}

.status {
	display: grid;
	grid-template-columns: 60px 89px 88px 88px 87px 168px 84px 54px 59px 59px 93px 73px 117px 48px 745px;
	height: 22px;
	line-height: 23px;
	text-align: center;
	color: #2a2a2a;
}
.status > * {
	border-right: 1px solid #c2cbdb;
}
.status b {
	background: #cfd8ee;
}
.status .last {
	text-align: left;
	padding-left: 3px;
	letter-spacing: -0.42px;
}
.status .current {
	display: flex;
	align-items: center;
	gap: 3px;
	padding-left: 4px;
}
.status .current i {
	width: 16px;
	height: 16px;
	background: #000;
}

.taskbar {
	display: flex;
	height: 40px;
	background: #202227;
	color: #fff;
	letter-spacing: -0.2px;
}
.start {
	width: 16px;
	height: 16px;
	margin: 12px 16px;
}
.search {
	display: flex;
	align-items: center;
	gap: 11px;
	width: 287px;
	padding-left: 11px;
	background: #313131;
	border: 1px solid #444;
	color: #d4d4d4;
	font-size: 15px;
}
.search svg {
	width: 17px;
	height: 17px;
}
.apps {
	display: flex;
	margin-left: 1px;
}
.apps span {
	display: flex;
	justify-content: center;
	align-items: center;
	width: 49.1px;
	height: 40px;
}
.apps svg {
	width: 24px;
	height: 24px;
}
.apps .run {
	background: linear-gradient(#76b9ed, #76b9ed) 50% 100% / 40px 2px no-repeat;
}
.apps .active {
	background-color: #4d4f52;
	background-size: 48px 2px;
}
.tray {
	width: 170px;
	height: 24px;
	margin: 7px 0 0 129px;
}
.lang, .clock {
	width: 42px;
	padding-top: 2px;
	line-height: 18px;
	text-align: center;
}
.clock {
	width: 59px;
}
.notes {
	width: 28px;
	height: 34px;
	margin: 4px 0 0 11px;
}
.peek {
	width: 1px;
	margin-left: 10px;
	background: #777;
}

.dialog {
	position: absolute;
	left: 864px;
	top: 242px;
	width: 427px;
	height: 560px;
	background: #f0f0f0;
	border: 1px solid #8a8d92;
	box-shadow: 1px 3px 12px rgba(0, 0, 0, .35);
	color: #000;
	letter-spacing: -0.2px;
}
.dialog-title {
	display: flex;
	align-items: center;
	height: 30px;
	padding: 0 0 2px 8px;
	background: #fff;
	color: #8c8c8c;
	letter-spacing: -0.3px;
}
.dialog-title .close {
	width: 11px;
	height: 11px;
	margin: 0 9px 0 auto;
}
.dialog-tabs {
	display: flex;
	align-items: flex-end;
	height: 36px;
	padding-left: 17px;
}
.dialog-tabs span {
	width: 51px;
	height: 19px;
	line-height: 18px;
	text-align: center;
	border: 1px solid #acacac;
	border-bottom: 0;
}
.dialog-tabs .on {
	position: relative;
	width: 142px;
	height: 22px;
	margin: 0 0 -1px -1px;
	line-height: 20px;
	background: #fff;
	letter-spacing: -0.35px;
}
.pane {
	width: 395px;
	height: 429px;
	margin-left: 15px;
	padding-top: 11px;
	background: #fff;
	border: 1px solid #acacac;
}
.row {
	display: flex;
	height: 33px;
}
.row.short {
	height: 32px;
}
.row label {
	width: 118px;
	line-height: 32px;
	text-align: right;
	letter-spacing: -0.35px;
}
.pane hr {
	height: 2px;
	margin: 14.5px 12px 9.5px;
	border: 0;
	background: #a8a8a8;
}
.slider {
	position: relative;
	display: flex;
	justify-content: space-between;
	align-items: flex-end;
	width: 190px;
	height: 33px;
	margin-left: 11px;
	padding-bottom: 1px;
	background: linear-gradient(#e3e6e6, #e3e6e6) 0 14px / 190px 4px no-repeat;
}
.slider svg {
	position: absolute;
	top: 8px;
	width: 12px;
	height: 18px;
	margin-left: -5px;
}
.slider u {
	width: 1px;
	height: 4px;
	background: #999;
}
.slider u:nth-of-type(2) {
	margin-left: -3px;
}
.row output {
	width: 50px;
	height: 23px;
	margin: 8px 0 0 10px;
	padding-right: 4px;
	line-height: 21px;
	text-align: right;
	background: #fff;
	border: 1px solid #888;
}
.row .box {
	width: 14px;
	height: 14px;
	margin: 9px 0 0 7px;
	border: 1px solid #222;
}
.disabled label, .disabled output {
	color: #838383;
}
.disabled .slider svg {
	opacity: .5;
}
.actions {
	display: flex;
	justify-content: flex-end;
	gap: 5px;
	padding: 25px 15px 0 0;
}
.actions span {
	width: 80px;
	height: 23px;
	line-height: 21px;
	text-align: center;
	background: #dcdcdc;
	border: 1px solid #757575;
}
.actions .hot {
	background: #bde6fb;
	border-color: #3c84b8;
}
.cursor {
	position: absolute;
	left: 1176px;
	top: 776px;
	width: 12px;
	height: 19px;
}

.banner {
	position: absolute;
	left: 667px;
	top: 41px;
	width: 587px;
	height: 161px;
	background: #04b18b;
	border: 7px solid #000;
	border-radius: 42px;
	box-shadow: 5px 6px 10px rgba(0, 0, 0, .6);
}
.banner svg {
	display: block;
	width: 587px;
	height: 161px;
	margin: -7px;
	filter: drop-shadow(4px 5px 4px rgba(0, 0, 0, .45));
}
.banner text {
	font: bold 88px "Liberation Sans", Arial, sans-serif;
	letter-spacing: 0;
	fill: #fff;
	stroke: #000;
	stroke-width: 10px;
	stroke-linejoin: round;
	paint-order: stroke;
}
```

FILE: grid.js
```
// projects the construction plane grid into the viewport
function project(x, y) {
	var w = 1 + 0.0223 * x + 0.0506 * y;
	return ((578 + 119.5 * x - 12.5 * y) / w).toFixed(1) + " " + ((687 - 22.5 * x - 36.8 * y) / w).toFixed(1);
}

var minor = "", major = "";

for (var i = -80; i <= 100; i++) {
	var c = i / 2;

	// stay in front of the camera
	var y0 = Math.max(-30, (0.12 - 1 - 0.0223 * c) / 0.0506);
	var x0 = Math.max(-40, (0.12 - 1 - 0.0506 * c) / 0.0223);

	var d = "M" + project(c, y0) + "L" + project(c, 50) + "M" + project(x0, c) + "L" + project(70, c);

	if (i % 10 == 0) {
		major += d;
	} else {
		minor += d;
	}
}

document.getElementById("grid-minor").setAttribute("d", minor);
document.getElementById("grid-major").setAttribute("d", major);
```
